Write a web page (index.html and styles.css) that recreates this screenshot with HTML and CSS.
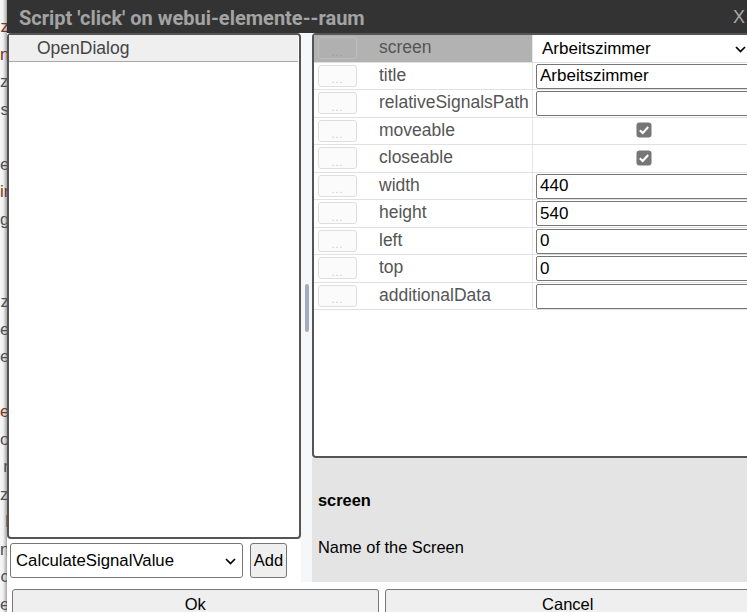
FILE: index.html
```html
<!DOCTYPE html>
<html>
<head>
<meta charset="utf-8">
<title>Script dialog</title>
<link rel="stylesheet" href="styles.css">
</head>
<body>
<div class="page">
  <div class="backdrop">
    <div class="frag red">z</div>
    <div class="frag red">n</div>
    <div class="frag">zi</div>
    <div class="frag">s</div>
    <div class="frag"></div>
    <div class="frag">e\</div>
    <div class="frag red">ir</div>
    <div class="frag">g</div>
    <div class="frag"></div>
    <div class="frag"></div>
    <div class="frag">z</div>
    <div class="frag">e</div>
    <div class="frag">e</div>
    <div class="frag"></div>
    <div class="frag red">el</div>
    <div class="frag">o</div>
    <div class="frag">r</div>
    <div class="frag">zi</div>
    <div class="frag">l</div>
    <div class="frag">n</div>
    <div class="frag">c</div>
    <div class="frag">er</div>
  </div>
  <div class="dialog">
    <div class="titlebar">
      <span class="title">Script 'click' on webui-elemente--raum</span>
      <span class="close">X</span>
    </div>
    <div class="content">
      <div class="leftcol">
        <div class="list">
          <div class="list-item">OpenDialog</div>
        </div>
        <div class="addrow">
          <div class="selectwrap">
            <select class="sel"><option>CalculateSignalValue</option></select>
            <svg class="chev" width="11" height="7" viewBox="0 0 11 7"><path d="M1 1 L5.5 5.5 L10 1" fill="none" stroke="#000" stroke-width="1.7"/></svg>
          </div>
          <button class="btn add">Add</button>
        </div>
      </div>
      <div class="splitter"><div class="thumb"></div></div>
      <div class="rightcol">
        <div class="props">
          <div class="row selected">
            <div class="c-btn"><button class="dots">...</button></div>
            <div class="c-label">screen</div>
            <div class="c-val">
              <div class="selectwrap full">
                <select class="sel plain"><option>Arbeitszimmer</option></select>
                <svg class="chev chev-r" width="11" height="7" viewBox="0 0 11 7"><path d="M1 1 L5.5 5.5 L10 1" fill="none" stroke="#000" stroke-width="1.7"/></svg>
              </div>
            </div>
          </div>
          <div class="row">
            <div class="c-btn"><button class="dots">...</button></div>
            <div class="c-label">title</div>
            <div class="c-val"><input class="inp" type="text" value="Arbeitszimmer"></div>
          </div>
          <div class="row">
            <div class="c-btn"><button class="dots">...</button></div>
            <div class="c-label">relativeSignalsPath</div>
            <div class="c-val"><input class="inp" type="text" value=""></div>
          </div>
          <div class="row">
            <div class="c-btn"><button class="dots">...</button></div>
            <div class="c-label">moveable</div>
            <div class="c-val center">
              <svg class="check" width="16" height="16" viewBox="0 0 16 16"><rect x="0.5" y="0.5" width="15" height="15" rx="3" fill="#767676"/><path d="M3.8 8.2 L6.7 11 L12.2 5" fill="none" stroke="#fff" stroke-width="2"/></svg>
            </div>
          </div>
          <div class="row">
            <div class="c-btn"><button class="dots">...</button></div>
            <div class="c-label">closeable</div>
            <div class="c-val center">
              <svg class="check" width="16" height="16" viewBox="0 0 16 16"><rect x="0.5" y="0.5" width="15" height="15" rx="3" fill="#767676"/><path d="M3.8 8.2 L6.7 11 L12.2 5" fill="none" stroke="#fff" stroke-width="2"/></svg>
            </div>
          </div>
          <div class="row">
            <div class="c-btn"><button class="dots">...</button></div>
            <div class="c-label">width</div>
            <div class="c-val"><input class="inp" type="text" value="440"></div>
          </div>
          <div class="row">
            <div class="c-btn"><button class="dots">...</button></div>
            <div class="c-label">height</div>
            <div class="c-val"><input class="inp" type="text" value="540"></div>
          </div>
          <div class="row">
            <div class="c-btn"><button class="dots">...</button></div>
            <div class="c-label">left</div>
            <div class="c-val"><input class="inp" type="text" value="0"></div>
          </div>
          <div class="row">
            <div class="c-btn"><button class="dots">...</button></div>
            <div class="c-label">top</div>
            <div class="c-val"><input class="inp" type="text" value="0"></div>
          </div>
          <div class="row">
            <div class="c-btn"><button class="dots">...</button></div>
            <div class="c-label">additionalData</div>
            <div class="c-val"><input class="inp" type="text" value=""></div>
          </div>
        </div>
        <div class="desc">
          <div class="desc-title">screen</div>
          <div class="desc-text">Name of the Screen</div>
        </div>
      </div>
    </div>
    <div class="footer">
      <button class="btn big">Ok</button>
      <button class="btn big">Cancel</button>
    </div>
  </div>
</div>
</body>
</html>
```

FILE: styles.css
```css
* { box-sizing: border-box; }
html, body { margin: 0; padding: 0; }
body {
  width: 747px;
  height: 612px;
  overflow: hidden;
  background: #333;
  font-family: "Liberation Sans", Arial, sans-serif;
  font-size: 16px;
}
.page {
  display: flex;
  width: 747px;
  height: 612px;
  overflow: hidden;
}
.backdrop {
  flex: 0 0 7px;
  overflow: hidden;
  padding-top: 13px;
  background: linear-gradient(to right, #f7f7f7 0, #f2f2f2 3px, #cdcdcd 5px, #a6a6a6 7px);
}
.frag {
  height: 27.5px;
  line-height: 27.5px;
  font-size: 17px;
  text-align: right;
  white-space: nowrap;
  margin-right: -2px;
  color: #4f4f58;
}
.frag.red { color: #7a3526; }
.dialog {
  flex: 0 0 750px;
  display: flex;
  flex-direction: column;
  background: #fff;
}
.titlebar {
  flex: none;
  height: 33px;
  background: #333;
  display: flex;
  align-items: center;
  justify-content: space-between;
  padding: 2px 12px 0 12px;
}
.title {
  font-family: Roboto, "Liberation Sans", sans-serif;
  font-weight: 700;
  font-size: 20px;
  color: #a3a3a3;
}
.close {
  color: #a8a8a8;
  font-size: 18px;
}
.content {
  flex: none;
  height: 549px;
  display: flex;
}
.leftcol {
  flex: 0 0 294px;
  display: flex;
  flex-direction: column;
}
.list {
  height: 506px;
  border: 2px solid #555;
  border-radius: 4px;
  background: #fff;
}
.list-item {
  height: 27px;
  line-height: 26px;
  background: #efefef;
  border-bottom: 1px solid #a8a8a8;
  padding-left: 28px;
  color: #444;
  font-size: 17.5px;
  margin-right: 1px;
}
.addrow {
  display: flex;
  gap: 7px;
  padding: 4px 0 0 3px;
}
.selectwrap {
  position: relative;
  width: 233px;
  height: 35px;
}
.selectwrap.full {
  width: 100%;
  height: 25px;
}
.sel {
  appearance: none;
  -webkit-appearance: none;
  width: 100%;
  height: 100%;
  border: 1px solid #767676;
  border-radius: 3px;
  background: #fff;
  font: 16.75px "Liberation Sans", Arial, sans-serif;
  color: #000;
  padding: 0 0 0 5px;
  margin: 0;
}
.sel.plain {
  border: none;
  padding-left: 6px;
  font-size: 17px;
}
.chev {
  position: absolute;
  right: 7px;
  top: 15px;
}
.chev-r {
  right: 9px;
  top: 10px;
}
.btn {
  font: 16.5px "Liberation Sans", Arial, sans-serif;
  background: #efefef;
  border: 1px solid #767676;
  border-radius: 3px;
  color: #000;
  padding: 0;
  margin: 0;
}
.add {
  width: 37px;
  height: 35px;
}
.splitter {
  flex: 0 0 11px;
  background: #f6f7f9;
  display: flex;
  align-items: center;
  justify-content: center;
}
.thumb {
  width: 4px;
  height: 48px;
  background: #a5adbc;
  border-radius: 2px;
}
.rightcol {
  flex: 1;
  min-width: 0;
  display: flex;
  flex-direction: column;
}
.props {
  flex: none;
  height: 425px;
  border: 2px solid #555;
  border-radius: 4px;
  background: #fff;
}
.row {
  display: grid;
  grid-template-columns: 47px 172px 1fr;
  height: 27.5px;
  border-bottom: 1px solid #e0e0e0;
}
.c-btn {
  padding: 2px 0 0 4px;
}
.dots {
  width: 39px;
  height: 22px;
  border: 1px solid #dedede;
  border-radius: 3px;
  background: #fbfbfb;
  color: #c4c4c4;
  font: 10px "Liberation Sans", Arial, sans-serif;
  padding: 9px 0 0 0;
  line-height: 10px;
  letter-spacing: 1px;
}
.c-label {
  display: flex;
  align-items: center;
  padding-left: 18px;
  padding-bottom: 1px;
  color: #555;
  font-size: 17.5px;
  border-right: 1px solid #e6e6e6;
  white-space: nowrap;
}
.selected .c-btn,
.selected .c-label {
  background: #b2b2b2;
}
.selected .dots {
  background: #b0b0b0;
  border-color: #bdbdbd;
  color: #9a9a9a;
}
.c-val {
  padding: 1px 0 0 3px;
  min-width: 0;
}
.c-val.center {
  display: flex;
  align-items: center;
  justify-content: center;
  padding: 0 0 1px 0;
}
.inp {
  width: 100%;
  height: 25px;
  border: 1px solid #767676;
  border-radius: 2px;
  font: 17px "Liberation Sans", Arial, sans-serif;
  color: #000;
  padding: 0 0 0 3px;
  margin: 0;
  background: #fff;
}
.desc {
  flex: 1;
  background: #e4e4e4;
  padding: 33px 6px 0 6px;
  color: #000;
  font-size: 16.4px;
}
.desc-title {
  font-weight: 700;
  line-height: 18px;
}
.desc-text {
  margin-top: 29px;
  line-height: 18px;
}
.footer {
  flex: 1;
  display: flex;
  gap: 6px;
  padding: 7px 6px 0 5px;
}
.big {
  flex: 1;
  height: 30px;
}
```
